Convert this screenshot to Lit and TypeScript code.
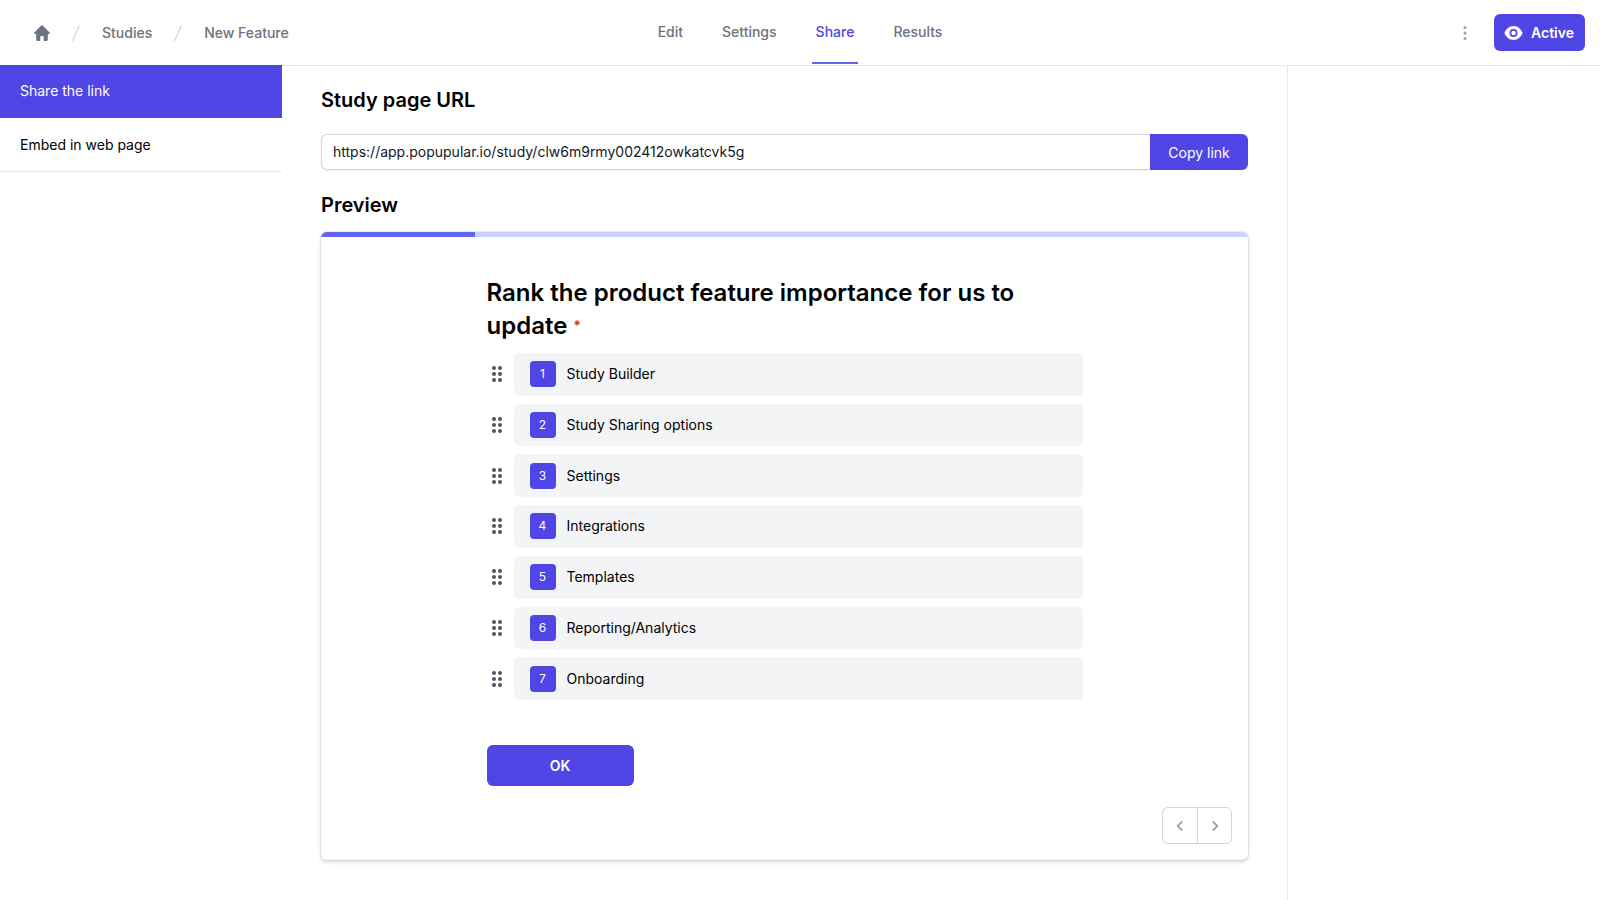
import { LitElement, html, css, svg } from "lit";
import { customElement, property, state } from "lit/decorators.js";
import { classMap } from "lit/directives/class-map.js";

const homeIcon = svg`<path d="M8.700.6a1 1 0 0 0-1.400 0L.4 7.500a.8.8 0 0 0 .6 1.400h1.200v5.900c0 .7.5 1.200 1.200 1.200h2.200c.4 0 .7-.3.7-.7v-3.600c0-.4.3-.7.7-.7h2c.4 0 .7.3.7.7v3.600c0 .4.3.7.7.7h2.200c.7 0 1.200-.5 1.200-1.200V8.900H15a.8.8 0 0 0 .6-1.400z"/>`;

@customElement("study-header")
class StudyHeader extends LitElement {
  @state() private tab = "Share";

  static styles = css`
    :host { display: block; }
    .bar {
      display: grid;
      grid-template-columns: 1fr auto 1fr;
      height: 65px;
      background: #fff;
      font-size: 14px;
      line-height: 20px;
      font-weight: 500;
      color: #6b7280;
    }
    .crumbs { display: flex; align-items: center; gap: 20px; margin: 0; padding: 0 0 0 34px; list-style: none; }
    .crumbs li { display: flex; align-items: center; gap: 20px; }
    a { color: inherit; text-decoration: none; }
    .home { display: flex; }
    .tabs { display: flex; gap: 31px; }
    .tab {
      display: flex;
      align-items: center;
      padding: 2px 4px 0;
      border-bottom: 2px solid transparent;
      margin-bottom: 1px;
    }
    .current { color: #4f46e5; border-bottom-color: #6366f1; }
    .actions { display: flex; align-items: center; justify-content: flex-end; gap: 19px; padding-right: 15px; }
    button { font: inherit; border: 0; cursor: pointer; }
    .more { display: flex; padding: 0; background: none; color: #9ca3af; }
    .active {
      display: flex;
      align-items: center;
      gap: 8px;
      height: 37px;
      padding: 0 11px 0 10px;
      border-radius: 6px;
      background: #4f46e5;
      color: #fff;
      font-weight: 600;
    }
  `;

  render() {
    return html`
      <header class="bar">
        <ol class="crumbs">
          <li>
            <a class="home" href="#home" aria-label="Home">
              <svg width="16" height="16" viewBox="0 0 16 16" fill="currentColor">${homeIcon}</svg>
            </a>
          </li>
          ${["Studies", "New Feature"].map(
            (name) => html`<li>
              <svg width="12" height="18" viewBox="0 0 12 18" fill="none" stroke="#d1d5db" stroke-width="1.200"><path d="M2.500 17 9.500 1"/></svg>
              <a href="#crumb">${name}</a>
            </li>`
          )}
        </ol>
        <nav class="tabs">
          ${["Edit", "Settings", "Share", "Results"].map(
            (t) => html`<a
              href="#${t.toLowerCase()}"
              class=${classMap({ tab: true, current: t === this.tab })}
              @click=${() => (this.tab = t)}
              >${t}</a>`
          )}
        </nav>
        <div class="actions">
          <button class="more" aria-label="More options">
            <svg width="20" height="20" viewBox="0 0 20 20" fill="currentColor">
              <circle cx="10" cy="4.500" r="1.500"/><circle cx="10" cy="10" r="1.500"/><circle cx="10" cy="15.500" r="1.500"/>
            </svg>
          </button>
          <button class="active">
            <svg width="19" height="16" viewBox="0 0 19 16" fill="none">
              <path fill="#fff" d="M.4 8C1.900 3.800 5.400 1 9.500 1s7.600 2.800 9.100 7c-1.500 4.200-5 7-9.100 7S1.900 12.200.4 8z"/>
              <circle cx="9.500" cy="8" r="3.100" stroke="#4f46e5" stroke-width="1.700"/>
            </svg>
            Active
          </button>
        </div>
      </header>
    `;
  }
}

@customElement("study-preview")
class StudyPreview extends LitElement {
  @property({ type: Array }) options: string[] = [];
  @property({ type: Number }) progress = 0;

  static styles = css`
    :host { display: block; }
    .card {
      display: flex;
      flex-direction: column;
      border-radius: 6px;
      overflow: hidden;
      background: #fff;
      box-shadow: 0 0 0 1px rgb(0 0 0 / 0.06), 0 2px 4px rgb(0 0 0 / 0.16);
    }
    .track { height: 5px; background: #c7d2fe; }
    .fill { height: 100%; background: #6366f1; }
    .form { width: 596px; max-width: 100%; margin: 0 auto; padding-top: 39px; }
    h2 { margin: 0; font-size: 24px; line-height: 33px; font-weight: 600; color: #000; }
    .required { font-size: 14px; font-weight: 500; color: #f01414; vertical-align: 3px; line-height: 14px; }
    .list {
      display: grid;
      grid-auto-rows: 1fr;
      gap: 8px;
      min-height: 347px;
      margin: 11px 0 0;
      padding: 0;
      list-style: none;
    }
    .row { display: grid; grid-template-columns: 20px 1fr; gap: 7px; align-items: stretch; }
    .handle { display: flex; align-items: center; justify-content: center; color: #4b5563; }
    .option {
      display: flex;
      align-items: center;
      gap: 11px;
      padding: 0 16px;
      border-radius: 5px;
      background: #f3f4f6;
      font-size: 14px;
      line-height: 20px;
      color: #000;
    }
    .rank {
      display: grid;
      place-items: center;
      width: 26px;
      height: 26px;
      border-radius: 4px;
      background: #4f46e5;
      color: #fff;
      font-size: 12px;
    }
    button { font: inherit; cursor: pointer; }
    .ok {
      width: 147px;
      height: 41px;
      margin-top: 45px;
      border: 0;
      border-radius: 6px;
      background: #4f46e5;
      color: #fff;
      font-size: 14px;
      font-weight: 600;
    }
    .pager { display: flex; align-self: flex-end; margin: 21px 16px 16px; }
    .step {
      display: grid;
      place-items: center;
      width: 35px;
      height: 37px;
      padding: 0;
      border: 1px solid #d1d5db;
      background: #fff;
      color: #9ca3af;
    }
    .prev { border-radius: 6px 0 0 6px; border-right: 0; }
    .next { border-radius: 0 6px 6px 0; }
  `;

  render() {
    return html`
      <section class="card">
        <div class="track"><div class="fill" style="width:${this.progress * 100}%"></div></div>
        <div class="form">
          <h2>Rank the product feature importance for us to update <span class="required">*</span></h2>
          <ol class="list">
            ${this.options.map(
              (o, i) => html`<li class="row">
                <span class="handle">
                  <svg width="12" height="18" viewBox="0 0 12 18" fill="currentColor">
                    ${[3, 9, 15].map((y) => svg`<circle cx="3" cy=${y} r="2"/><circle cx="9" cy=${y} r="2"/>`)}
                  </svg>
                </span>
                <div class="option"><span class="rank">${i + 1}</span>${o}</div>
              </li>`
            )}
          </ol>
          <button class="ok">OK</button>
        </div>
        <div class="pager">
          <button class="step prev" aria-label="Previous">
            <svg width="10" height="12" viewBox="0 0 10 12" fill="none" stroke="currentColor" stroke-width="1.800"><path d="M7.200 1.500 2.700 6l4.500 4.500"/></svg>
          </button>
          <button class="step next" aria-label="Next">
            <svg width="10" height="12" viewBox="0 0 10 12" fill="none" stroke="currentColor" stroke-width="1.800"><path d="M2.800 1.500 7.300 6l-4.500 4.500"/></svg>
          </button>
        </div>
      </section>
    `;
  }
}

@customElement("app-root")
class AppRoot extends LitElement {
  @state() private section = "Share the link";

  private options = [
    "Study Builder",
    "Study Sharing options",
    "Settings",
    "Integrations",
    "Templates",
    "Reporting/Analytics",
    "Onboarding",
  ];

  static styles = css`
    :host {
      display: flex;
      flex-direction: column;
      min-height: 100vh;
      background: #fff;
      font-family: Inter, "Liberation Sans", sans-serif;
      color: #000;
    }
    * { box-sizing: border-box; }
    .body { flex: 1; display: grid; grid-template-columns: 282px minmax(0, 1fr) 313px; }
    .side { display: flex; flex-direction: column; gap: 1px; }
    .item {
      padding: 16px 20px;
      border-bottom: 1px solid #e9eaee;
      color: #000;
      font-size: 14px;
      line-height: 20px;
      text-decoration: none;
    }
    .selected { background: #4f46e5; border-bottom-color: #4f46e5; color: #fff; }
    .main { padding: 20px 39px 38px; border-top: 1px solid #e5e7eb; }
    .rail { border-top: 1px solid #e5e7eb; border-left: 1px solid #e5e7eb; }
    .title { display: block; margin: 0; font-size: 20px; line-height: 28px; font-weight: 600; }
    .url { display: flex; margin: 20px 0 21px; height: 36px; }
    .field {
      flex: 1;
      min-width: 0;
      padding: 0 11px 2px;
      border: 1px solid #d1d5db;
      border-right: 0;
      border-radius: 6px 0 0 6px;
      box-shadow: 0 1px 2px rgb(0 0 0 / 0.06);
      font: inherit;
      font-size: 14px;
      color: #111827;
      outline: 0;
    }
    .copy {
      width: 98px;
      border: 0;
      border-radius: 0 6px 6px 0;
      background: #4f46e5;
      color: #fff;
      font: inherit;
      font-size: 14px;
      cursor: pointer;
    }
    .preview { margin-top: 13px; }
  `;

  render() {
    return html`
      <study-header></study-header>
      <div class="body">
        <nav class="side">
          ${["Share the link", "Embed in web page"].map(
            (s) => html`<a
              href="#section"
              class=${classMap({ item: true, selected: s === this.section })}
              @click=${() => (this.section = s)}
              >${s}</a>`
          )}
        </nav>
        <main class="main">
          <label class="title" for="url">Study page URL</label>
          <div class="url">
            <input id="url" class="field" readonly value="https://app.popupular.io/study/clw6m9rmy002412owkatcvk5g" />
            <button class="copy">Copy link</button>
          </div>
          <h1 class="title">Preview</h1>
          <study-preview class="preview" .options=${this.options} .progress=${1 / 6}></study-preview>
        </main>
        <aside class="rail"></aside>
      </div>
    `;
  }
}
